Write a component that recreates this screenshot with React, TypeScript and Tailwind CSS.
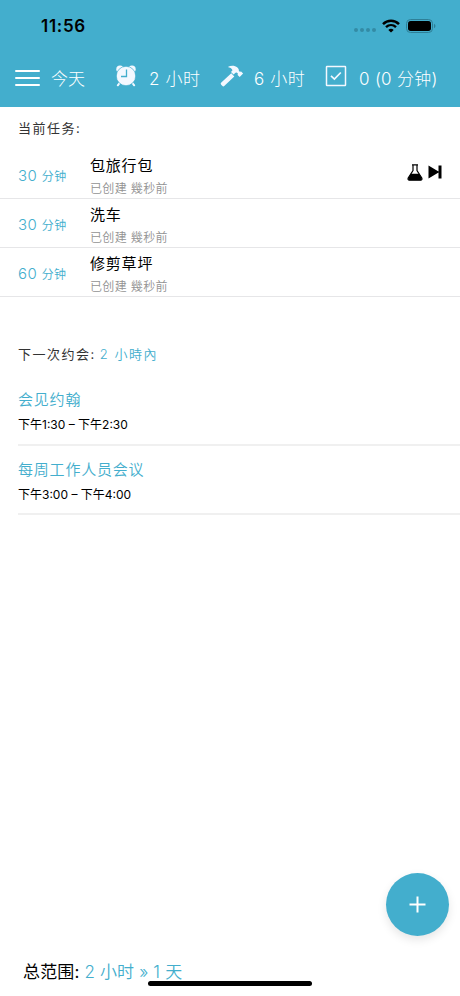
const tasks = [
	{ minutes: 30, title: "包旅行包", active: true },
	{ minutes: 30, title: "洗车", active: false },
	{ minutes: 60, title: "修剪草坪", active: false },
];

const appointments = [
	{ title: "会见约翰", time: "下午1:30 – 下午2:30" },
	{ title: "每周工作人员会议", time: "下午3:00 – 下午4:00" },
];

const AlarmIcon = () => (
	<svg className="block h-[22px] w-[22px]" viewBox="0 0 22 22" fill="none">
		<circle cx="5" cy="4.2" r="3.7" fill="#f3f8ff" />
		<circle cx="17" cy="4.2" r="3.7" fill="#f3f8ff" />
		<path d="M5 17.500 2.800 20.300M17 17.500l2.200 2.800" stroke="#f3f8ff" strokeWidth="2" strokeLinecap="round" />
		<circle cx="11" cy="11" r="9.700" fill="#f3f8ff" stroke="#43aecd" strokeWidth="0.7" />
		<path d="M11.500 4.500v7H6" stroke="#43aecd" strokeWidth="1.300" />
	</svg>
);

const HammerIcon = () => (
	<svg className="block h-[22px] w-[24px]" viewBox="0 0 24 22" fill="#f3f8ff">
		<path d="M1.300 17.400 11.300 8.200l3 3.200L4.500 20.800a1.600 1.600 0 0 1-2.300 0l-1-1.100a1.600 1.600 0 0 1 .1-2.300Z" />
		<path d="M7.800 2C11 .2 14.800.300 17.400 2.600c1 .9 1.500 1.900 1.500 3.300l1 .9 1.200-.4 2 2.100-3.400 3.500-2.100-2.100.3-1.300-1.200-1.100-1.200.2-1.900 1.900-2.600-2.700 1.500-1.600C11.700 3.400 10 2.500 7.800 2Z" />
	</svg>
);

const CheckIcon = () => (
	<svg className="block h-[22px] w-[22px]" viewBox="0 0 22 22" fill="none" stroke="#f3f8ff">
		<rect x="1.5" y="1.500" width="19" height="19" rx="0.5" strokeWidth="1.500" />
		<path d="m6 10.900 3.400 3.200 6.400-6.600" strokeWidth="1.700" />
	</svg>
);

const FlaskIcon = () => (
	<svg className="block h-[17px] w-[16px]" viewBox="0 0 16 17" fill="none">
		<path d="M5 .8h6M6 1v5.500L1.200 14q-.7 2 1.200 2.200h11.200q1.900-.2 1.200-2.200L10 6.500V1" stroke="#000" strokeWidth="1.200" />
		<path d="M3.800 9.800h8.400l2.500 4.300q.6 1.900-1.100 2.100H2.400q-1.700-.2-1.100-2.100Z" fill="#000" />
	</svg>
);

const SkipIcon = () => (
	<svg className="block h-[14px] w-[14px]" viewBox="0 0 14 14" fill="#000">
		<path d="M.5.6 10.500 6.500V.4h3v13.200h-3V7.500L.5 13.400Z" />
	</svg>
);

const StatusBar = () => (
	<div className="flex h-[52px] items-center pl-[41px] pr-[24px] text-black">
		<span className="font-['Inter'] text-[17px] font-semibold leading-[20px] tracking-[0.700px]">11:56</span>
		<div className="ml-auto flex items-center">
			<div className="mr-[6px] mt-[8px] flex gap-[2px]">
				{[0, 1, 2, 3].map((dot) => (
					<span key={dot} className="size-[4px] rounded-full bg-[#338ba5]" />
				))}
			</div>
			<svg className="mr-[6px] block h-[14px] w-[18px]" viewBox="0 0 18 14" fill="none" stroke="#000">
				<path d="M1 5.100c4.600-4.500 11.400-4.500 16 0" strokeWidth="2.500" />
				<path d="M4 8.200c2.900-2.800 7.100-2.800 10 0" strokeWidth="2.400" />
				<path d="M9 13.600 6.300 10.900c1.500-1.500 3.900-1.500 5.400 0Z" fill="#000" stroke="none" />
			</svg>
			<svg className="block h-[14px] w-[30px]" viewBox="0 0 30 14" fill="none">
				<rect x=".5" y=".5" width="26" height="13" rx="4" stroke="#2e7f97" />
				<rect x="2" y="2" width="23" height="10" rx="2.700" fill="#000" />
				<path d="M28 4.800v4.400q1.500-.7 1.500-2.200T28 4.800Z" fill="#2e7f97" />
			</svg>
		</div>
	</div>
);

const Header = () => (
	<header className="h-[107px] bg-[#43aecd]">
		<StatusBar />
		<div className="flex h-[52px] items-center whitespace-nowrap pl-[15px] pt-[2px] text-[17px] font-light tracking-[0.600px] text-white">
			<div className="mb-[2px] flex w-[25px] flex-col gap-[5px]">
				<span className="h-[2px] rounded-full bg-white" />
				<span className="h-[2px] rounded-full bg-white" />
				<span className="h-[2px] rounded-full bg-white" />
			</div>
			<span className="ml-[11px] mt-[2px] w-[64px] tracking-normal">今天</span>
			<div className="mb-[7px] w-[34px]"><AlarmIcon /></div>
			<span className="mt-[2px] w-[71px]">2 小时</span>
			<div className="mb-[7px] w-[34px]"><HammerIcon /></div>
			<span className="mt-[2px] w-[71px]">6 小时</span>
			<div className="mb-[7px] w-[34px]"><CheckIcon /></div>
			<span className="mt-[2px] tracking-[0.300px]">0 (0 分钟)</span>
		</div>
	</header>
);

const App = () => {
	return (
		<div className="flex h-[996px] w-[460px] flex-col overflow-hidden bg-white font-['Inter','Noto_Sans_CJK_SC',sans-serif]">
			<Header />
			<main className="flex-1">
				<h2 className="flex h-[43px] items-center pl-[18px] text-[13px] font-normal tracking-[1.500px] text-[#333]">当前任务:</h2>
				{tasks.map((task) => (
					<div key={task.title} className="flex h-[49px] items-center border-b border-[#e6e6e8] pl-[18px] pr-[18px]">
						<div className="mt-[5px] w-[72px] text-[15px] font-[350] tracking-[0.400px] text-[#43aecd]">
							{task.minutes} <span className="text-[12px]">分钟</span>
						</div>
						<div className="pt-[7px]">
							<p className="text-[15px] leading-[22px] tracking-[0.800px] text-black">{task.title}</p>
							<p className="text-[12px] font-[350] leading-[24px] tracking-[0.350px] text-[#929292]">已创建 幾秒前</p>
						</div>
						{task.active && (
							<div className="mb-[4px] ml-auto flex items-center gap-[5px]">
								<FlaskIcon />
								<SkipIcon />
							</div>
						)}
					</div>
				))}
				<h2 className="mt-[45px] flex h-[26px] items-center gap-[4px] pl-[18px] text-[13px] font-normal tracking-[1.500px] text-[#333]">
					<span>下一次约会:</span>
					<span className="font-[350] tracking-[1.500px] text-[#43aecd]">2 小時內</span>
				</h2>
				<div className="mt-[8px] pl-[18px]">
					{appointments.map((appointment) => (
						<div key={appointment.title} className="h-[69.500px] border-b-2 border-[#f0f0f0] pt-[12px]">
							<p className="text-[15px] font-[350] leading-[23px] tracking-[0.800px] text-[#43aecd]">{appointment.title}</p>
							<p className="mt-[3px] text-[12px] leading-[22px] text-black">{appointment.time}</p>
						</div>
					))}
				</div>
			</main>
			<button className="mb-[10px] ml-auto mr-[11px] flex size-[63px] items-center justify-center rounded-full bg-[#43aecd] shadow-[0_4px_10px_rgba(0,0,0,0.1)]" aria-label="+">
				<svg className="size-[17px]" viewBox="0 0 17 17" stroke="#fff" strokeWidth="2">
					<path d="M8.500 .5v16M.5 8.500h16" />
				</svg>
			</button>
			<footer className="relative h-[50px] pl-[23px] pt-[11px] text-[17px] leading-[30px] tracking-[0.150px] text-black">
				总范围: <span className="font-[350] text-[#43aecd]">2 小时 » 1 天</span>
				<span className="absolute left-[148px] top-[35px] h-[5px] w-[164px] rounded-full bg-black" />
			</footer>
		</div>
	);
};

export default App;
